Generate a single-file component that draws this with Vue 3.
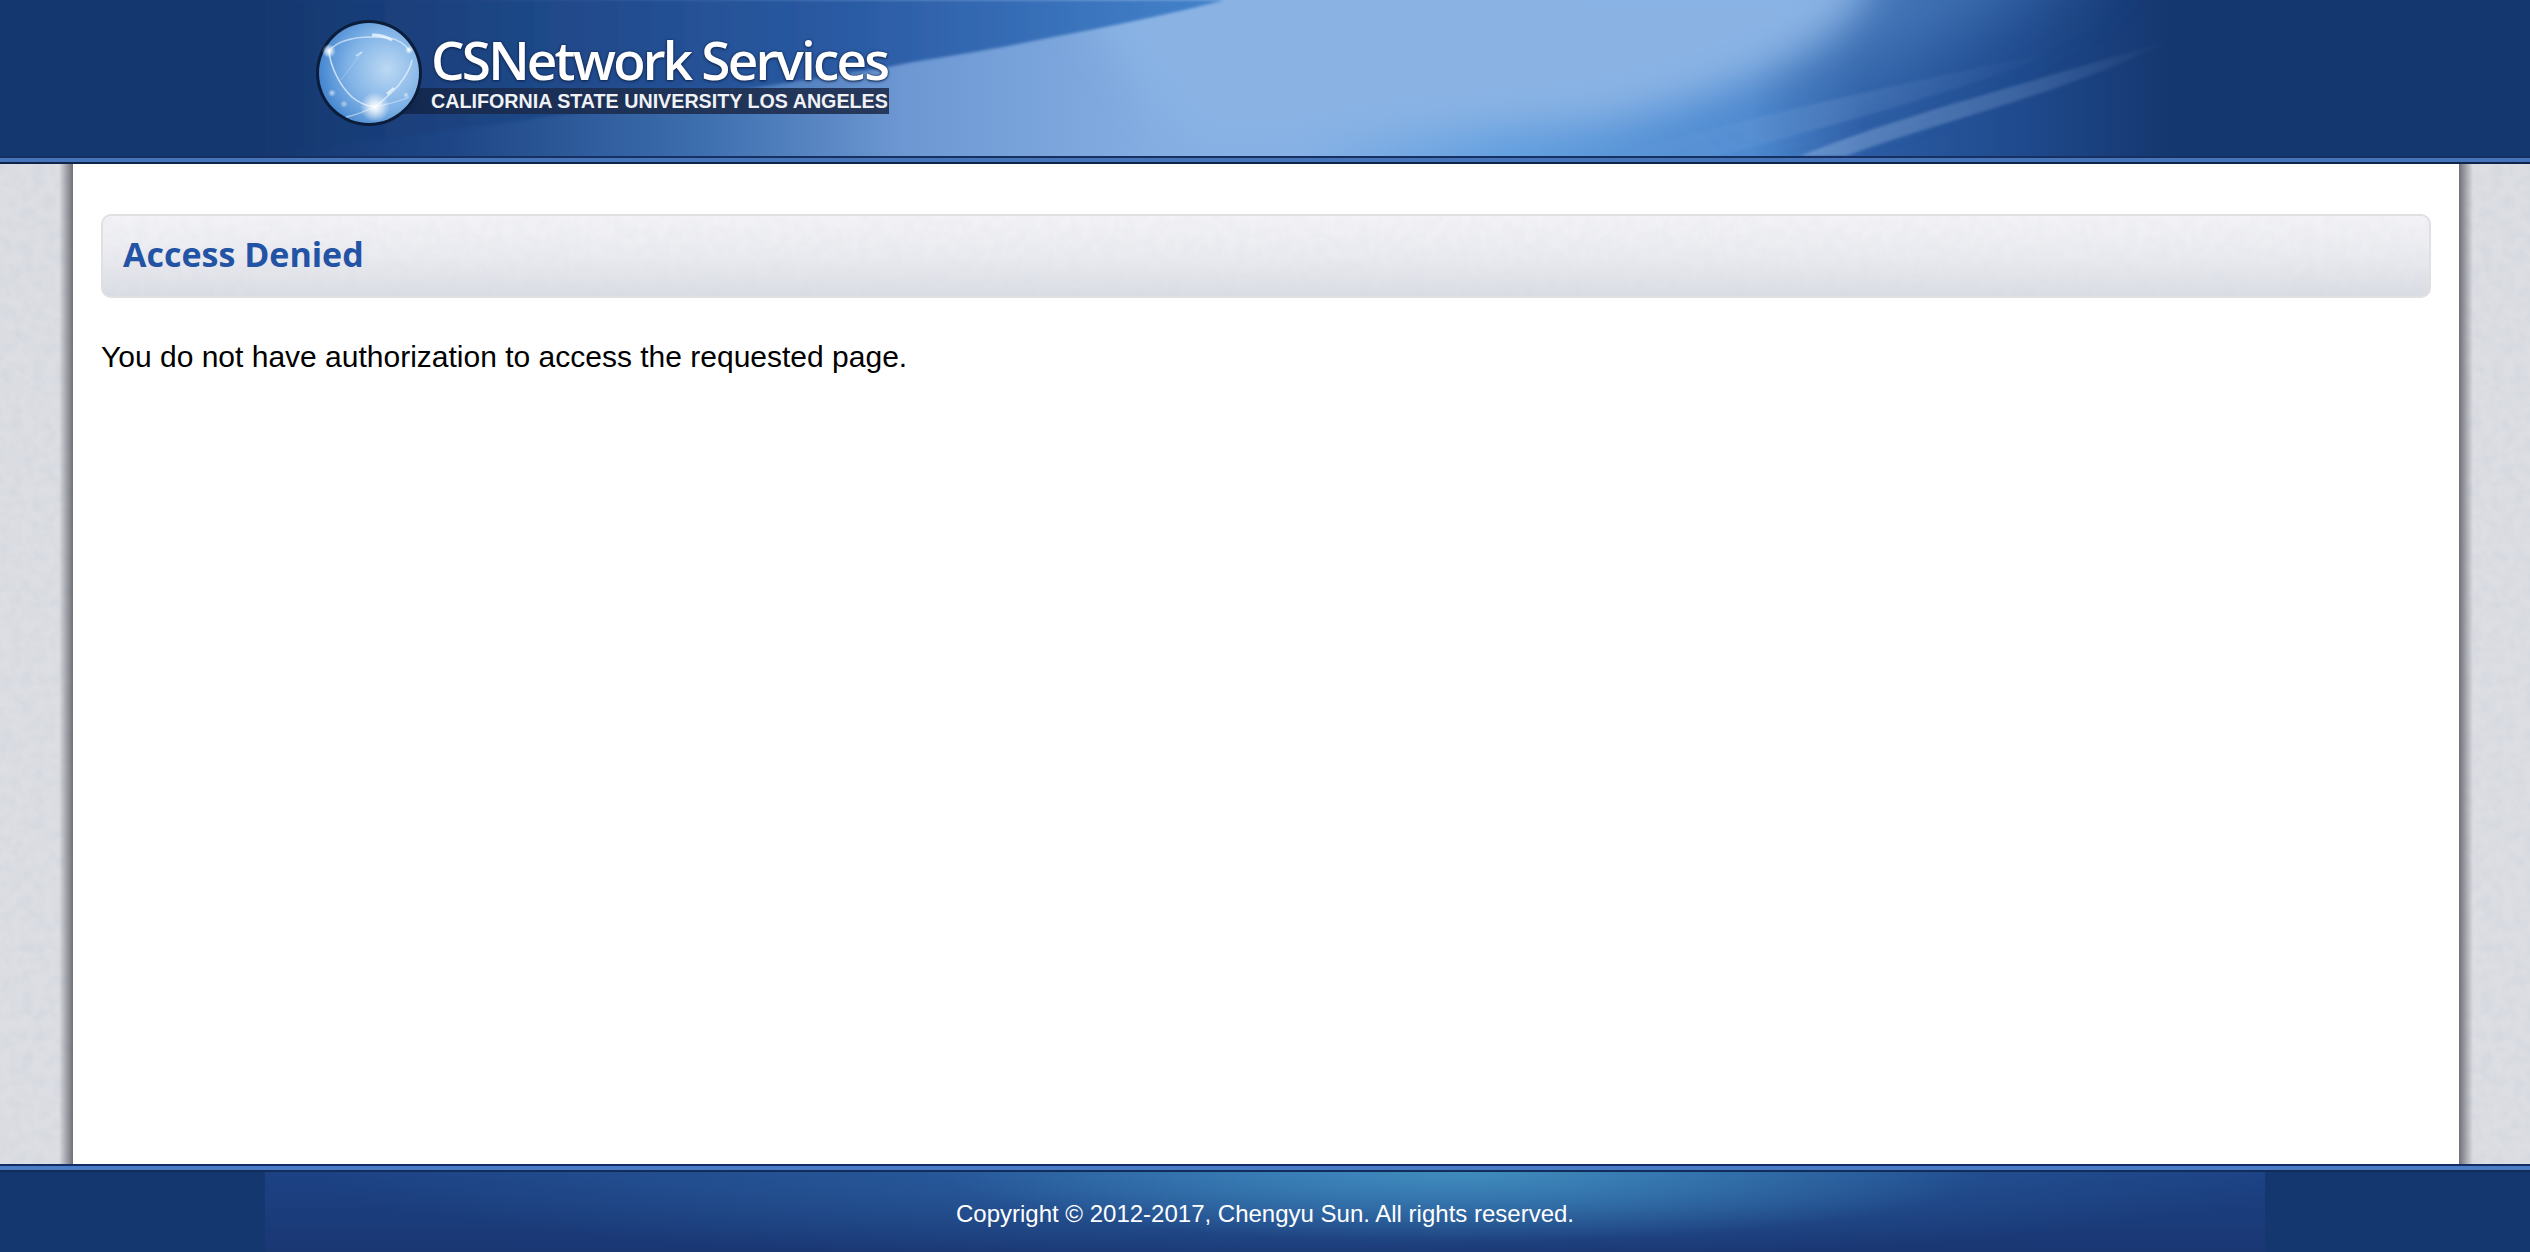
<script setup>
const title = 'Access Denied'
const message = 'You do not have authorization to access the requested page.'
const copyright = 'Copyright © 2012-2017, Chengyu Sun. All rights reserved.'
</script>

<template>
  <div class="page">
    <header class="header">
      <svg class="art" viewBox="0 0 2530 156" preserveAspectRatio="none" aria-hidden="true">
        <defs>
          <linearGradient id="hBase" x1="0" x2="2530" y1="0" y2="0" gradientUnits="userSpaceOnUse">
            <stop offset="0" stop-color="#15376f" />
            <stop offset="0.105" stop-color="#15376f" />
            <stop offset="0.178" stop-color="#1e4686" />
            <stop offset="0.277" stop-color="#3d6eae" />
            <stop offset="0.356" stop-color="#6c97d2" />
            <stop offset="0.455" stop-color="#84aee2" />
            <stop offset="0.514" stop-color="#84b0e6" />
            <stop offset="0.593" stop-color="#629fdf" />
            <stop offset="0.692" stop-color="#4f8ad0" />
            <stop offset="0.737" stop-color="#2c5ca4" />
            <stop offset="0.798" stop-color="#1f4a8d" />
            <stop offset="0.858" stop-color="#15376f" />
            <stop offset="1" stop-color="#15376f" />
          </linearGradient>
          <linearGradient id="hSweep" x1="266" x2="1230" y1="0" y2="0" gradientUnits="userSpaceOnUse">
            <stop offset="0" stop-color="#15376f" />
            <stop offset="0.6" stop-color="#2a5aa3" />
            <stop offset="1" stop-color="#4484cc" />
          </linearGradient>
          <linearGradient id="hStreakA" x1="1600" x2="2060" y1="0" y2="0" gradientUnits="userSpaceOnUse">
            <stop offset="0" stop-color="#9ec0e8" stop-opacity="0" />
            <stop offset="0.5" stop-color="#9ec0e8" stop-opacity="0.16" />
            <stop offset="1" stop-color="#9ec0e8" stop-opacity="0" />
          </linearGradient>
          <linearGradient id="hStreakB" x1="1800" x2="2171" y1="0" y2="0" gradientUnits="userSpaceOnUse">
            <stop offset="0" stop-color="#a8c6ea" stop-opacity="0.4" />
            <stop offset="0.6" stop-color="#a8c6ea" stop-opacity="0.2" />
            <stop offset="1" stop-color="#a8c6ea" stop-opacity="0" />
          </linearGradient>
          <filter id="hBlur" x="-10%" y="-40%" width="120%" height="180%"><feGaussianBlur stdDeviation="20" /></filter>
          <filter id="hWide" x="-20%" y="-60%" width="140%" height="220%"><feGaussianBlur stdDeviation="38" /></filter>
          <filter id="hSoft" x="-10%" y="-30%" width="120%" height="160%"><feGaussianBlur stdDeviation="1.5" /></filter>
          <filter id="gSoft" x="-10%" y="-10%" width="120%" height="120%"><feGaussianBlur stdDeviation="0.7" /></filter>
        </defs>
        <rect width="2530" height="156" fill="url(#hBase)" />
        <path d="M1750 -60 H2110 L1880 70 L1760 90 Z" fill="#4a7cbc" opacity="0.85" filter="url(#hWide)" />
        <path d="M1050 -40 H1880 C1860 40 1770 85 1600 122 L1200 150 Z" fill="#8ab3e4" filter="url(#hBlur)" />
        <path d="M266 0 H1225 C1140 22 1060 35 1003 47 C960 55 920 60 888 67 C700 98 480 125 266 156 Z" fill="url(#hSweep)" filter="url(#hSoft)" />
        <path d="M1600 160 C1750 115 1900 85 2060 50 C1980 85 1860 118 1740 150 L1650 172 Z" fill="url(#hStreakA)" filter="url(#hSoft)" />
        <path d="M1800 156 C1900 115 2040 80 2171 40 C2060 95 1960 115 1846 156 Z" fill="url(#hStreakB)" filter="url(#hSoft)" />
      </svg>
      <div class="brand">
        <svg class="globe" viewBox="0 0 108 108" aria-hidden="true">
          <defs>
            <radialGradient id="gFill" cx="0.68" cy="0.46" r="0.72">
              <stop offset="0" stop-color="#bcd9f4" />
              <stop offset="0.55" stop-color="#7fb2e6" />
              <stop offset="1" stop-color="#3d80cc" />
            </radialGradient>
            <radialGradient id="gFlare">
              <stop offset="0" stop-color="#ffffff" />
              <stop offset="0.35" stop-color="#ffffff" stop-opacity="0.7" />
              <stop offset="1" stop-color="#ffffff" stop-opacity="0" />
            </radialGradient>
          </defs>
          <circle cx="54" cy="54" r="53" fill="#0b1d3a" />
          <circle cx="54" cy="54" r="50" fill="url(#gFill)" />
          <g filter="url(#gSoft)" fill="none" stroke="#eaf4fd">
            <path d="M14 32 C24 20 44 16 74 19 C82 20 90 25 94 31" stroke-width="1.4" opacity="0.65" />
            <path d="M57 16 C64 16 72 18 77 21" stroke-width="3" opacity="0.85" />
            <path d="M14 32 C15 46 24 66 37 78 C44 84 52 87 60 88" stroke-width="1.6" opacity="0.75" />
            <path d="M97 41 C95 52 85 66 77 73 C71 79 66 83 60 88" stroke-width="1.6" opacity="0.7" />
            <path d="M31 98 C42 96 52 91 60 88 C72 85 84 83 94 78" stroke-width="1.3" opacity="0.5" />
            <path d="M47 33 L26 61" stroke-width="0.8" opacity="0.35" />
            <path d="M41 37 L47 33" stroke-width="2" opacity="0.6" />
            <path d="M72 75 L79 69" stroke-width="2.6" opacity="0.8" />
          </g>
          <circle cx="60" cy="88" r="15" fill="url(#gFlare)" />
          <circle cx="14" cy="32" r="7" fill="url(#gFlare)" />
          <circle cx="94" cy="31" r="4" fill="url(#gFlare)" />
          <circle cx="17" cy="74" r="4" fill="url(#gFlare)" opacity="0.6" />
          <circle cx="29" cy="85" r="4" fill="url(#gFlare)" opacity="0.5" />
          <circle cx="91" cy="76" r="3" fill="url(#gFlare)" opacity="0.6" />
        </svg>
        <div class="wordmark">
          <div class="wordmark-name">CSNetwork Services</div>
          <div class="wordmark-band">CALIFORNIA STATE UNIVERSITY LOS ANGELES</div>
        </div>
      </div>
    </header>
    <div class="rule rule-top"></div>

    <div class="middle">
      <div class="side side-left"><svg class="noise" aria-hidden="true"><filter id="grain"><feTurbulence type="fractalNoise" baseFrequency="0.09" numOctaves="3" seed="4" /><feColorMatrix values="0 0 0 0 0.6  0 0 0 0 0.63  0 0 0 0 0.7  0.8 0 0 0 -0.27" /></filter><rect width="100%" height="100%" filter="url(#grain)" /></svg></div>
      <main class="content">
        <h1 class="title">
          <svg class="noise" aria-hidden="true"><rect width="100%" height="100%" filter="url(#grain)" opacity="0.25" /></svg>
          <span class="title-text">{{ title }}</span>
        </h1>
        <p class="message">{{ message }}</p>
      </main>
      <div class="side side-right"><svg class="noise" aria-hidden="true"><rect width="100%" height="100%" filter="url(#grain)" /></svg></div>
    </div>

    <footer class="footer">
      <div class="rule rule-bottom"></div>
      <div class="footer-body">
        <div class="footer-art">{{ copyright }}</div>
      </div>
    </footer>
  </div>
</template>

<style>
html, body { margin: 0; padding: 0; }
</style>

<style scoped>
.page {
  display: flex;
  flex-direction: column;
  min-height: 1252px;
  background: #fff;
  font-family: "Liberation Sans", Arial, sans-serif;
  color: #000;
}
.header {
  position: relative;
  height: 156px;
  background: #15376f;
  overflow: hidden;
  flex: none;
}
.art {
  position: absolute;
  inset: 0;
  width: 100%;
  height: 100%;
}
.brand {
  position: relative;
  display: flex;
  align-items: flex-start;
  gap: 8px;
  padding: 19px 0 0 315px;
}
.globe {
  position: relative;
  z-index: 1;
  width: 108px;
  height: 108px;
  flex: none;
}
.wordmark {
  display: flex;
  flex-direction: column;
}
.wordmark-name {
  font-family: "Open Sans", "Noto Sans", sans-serif;
  font-size: 53px;
  font-weight: 600;
  line-height: 50px;
  height: 69px;
  padding-top: 16px;
  box-sizing: border-box;
  color: #fff;
  letter-spacing: -2.8px;
  white-space: nowrap;
  text-shadow: 0 0 2px #10264f, 0 1px 3px #10264f;
}
.wordmark-band {
  margin-left: -40px;
  padding-left: 40px;
  width: 458px;
  height: 26px;
  line-height: 26px;
  background: linear-gradient(90deg, #10264f 0, #182c52 12%, #26395c 100%);
  color: #f0f2f6;
  font-size: 19.7px;
  font-weight: 700;
  white-space: nowrap;
}
.rule {
  flex: none;
  box-sizing: border-box;
  height: 8px;
  background: #4674bb;
}
.rule-top {
  border-top: 2px solid #16305f;
  border-bottom: 2px solid #0e2347;
}
.rule-bottom {
  border-top: 2px solid #122c66;
  border-bottom: 2px solid #122c5c;
  background: #4a7cc6;
}
.middle {
  display: flex;
  flex: 1;
  min-height: 0;
}
.side {
  position: relative;
  flex: none;
  overflow: hidden;
  background: #dcdee3;
}
.side-left { width: 73px; }
.side-right { width: 71px; }
.side::after {
  content: "";
  position: absolute;
  top: 0;
  bottom: 0;
  width: 14px;
}
.side-left::after {
  right: 0;
  background: linear-gradient(90deg, rgba(100, 100, 108, 0), rgba(100, 100, 108, 0.9));
}
.side-right::after {
  left: 0;
  background: linear-gradient(270deg, rgba(100, 100, 108, 0), rgba(100, 100, 108, 0.9));
}
.noise {
  position: absolute;
  inset: 0;
  width: 100%;
  height: 100%;
}
.content {
  flex: 1;
  min-width: 0;
  padding: 50px 28px 0;
  background: #fff;
}
.title {
  position: relative;
  overflow: hidden;
  box-sizing: border-box;
  height: 84px;
  margin: 0;
  padding: 0 20px;
  border: 2px solid #e0e0e2;
  border-radius: 10px;
  background: linear-gradient(180deg, #f3f3f7 0, #eaebf0 50%, #dadde4 100%);
  color: #2353a4;
  font-family: "Open Sans", "Noto Sans", sans-serif;
  font-size: 34px;
  font-weight: 700;
  line-height: 77px;
}
.title-text {
  position: relative;
}
.message {
  margin: 39px 0 0;
  font-size: 30px;
  line-height: 40px;
}
.footer {
  flex: none;
}
.footer-body {
  height: 80px;
  background: #15376f;
  display: flex;
  justify-content: center;
}
.footer-art {
  width: 2000px;
  height: 100%;
  line-height: 84px;
  text-align: center;
  color: #fff;
  font-size: 24px;
  background:
    radial-gradient(ellipse 520px 70px at 60% 0, rgba(70, 155, 200, 0.75), rgba(70, 155, 200, 0) 100%),
    radial-gradient(ellipse 1000px 90px at 52% 0, rgba(50, 110, 175, 0.75), rgba(50, 110, 175, 0) 100%),
    linear-gradient(180deg, #1c4284 0, #1a3773 100%);
}
</style>
